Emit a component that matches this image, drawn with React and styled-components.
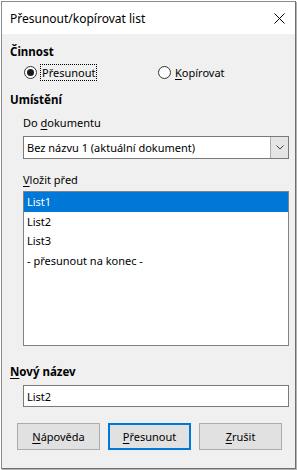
import React from "react"
import styled, { createGlobalStyle } from "styled-components"

const GlobalStyle = createGlobalStyle`
  html, body {
    margin: 0;
    padding: 0;
    background: #ffffff;
  }
  body {
    font-family: "Noto Sans", "Open Sans", sans-serif;
    font-size: 11px;
    color: #000;
  }
`

const Screen = styled.div`
  width: 297px;
  height: 470px;
  padding: 1px 0 0 1px;
  box-sizing: border-box;
  background: #fff;
`

const Dialog = styled.div`
  width: 295px;
  height: 468px;
  box-sizing: border-box;
  border: 1px solid #8c8c8c;
  border-right-color: #6e6e6e;
  border-bottom-color: #6e6e6e;
  box-shadow: 1px 1px 0 #b4b4b4;
  background: #f0f0f0;
  display: flex;
  flex-direction: column;
`

const TitleBar = styled.div`
  height: 32px;
  background: #fff;
  display: flex;
  align-items: center;
  justify-content: space-between;
  padding: 0 10px 0 8px;
`

const Title = styled.span`
  font-size: 12px;
`

const Body = styled.div`
  display: flex;
  flex-direction: column;
  padding: 10px 8px 0 8px;
`

const Heading = styled.div`
  font-weight: 700;
  font-size: 11.5px;
  line-height: 16px;
  margin-top: ${(p) => p.$top || 0}px;
`

const Label = styled.div`
  line-height: 16px;
  margin: ${(p) => p.$top || 0}px 0 0 13px;
`

const Key = styled.span`
  text-decoration: underline;
  text-underline-offset: 2px;
`

const RadioRow = styled.div`
  display: flex;
  align-items: center;
  margin-top: 4px;
  padding-left: 14px;
  height: 16px;
`

const Radio = styled.label`
  display: flex;
  align-items: center;
  gap: 4px;
  width: ${(p) => p.$width}px;
`

const Circle = styled.span`
  width: 13px;
  height: 13px;
  box-sizing: border-box;
  border: 1px solid #333;
  border-radius: 50%;
  background: #fff;
  display: flex;
  align-items: center;
  justify-content: center;
  &::after {
    content: "";
    width: 7px;
    height: 7px;
    border-radius: 50%;
    background: ${(p) => (p.$checked ? "#1a1a1a" : "transparent")};
  }
`

const Focus = styled.span`
  outline: 1px dotted #000;
  outline-offset: 0;
  padding: 0 1px;
  line-height: 15px;
`

const Select = styled.div`
  margin: 5px 0 0 13px;
  width: 266px;
  height: 23px;
  box-sizing: border-box;
  border: 1px solid #7a7a7a;
  background: #fff;
  display: flex;
  align-items: stretch;
`

const SelectText = styled.div`
  flex: 1;
  padding-left: 3px;
  display: flex;
  align-items: center;
`

const DropButton = styled.div`
  width: 17px;
  background: #e5e5e5;
  border-left: 1px solid #adadad;
  display: flex;
  align-items: center;
  justify-content: center;
`

const ListBox = styled.div`
  margin: 3px 0 0 13px;
  width: 266px;
  height: 155px;
  box-sizing: border-box;
  border: 1px solid #828282;
  background: #fff;
`

const Item = styled.div`
  height: 19.5px;
  line-height: 19.5px;
  padding-left: 3px;
  background: ${(p) => (p.$selected ? "#0078d7" : "transparent")};
  color: ${(p) => (p.$selected ? "#fff" : "#000")};
`

const Input = styled.div`
  margin: 5px 0 0 13px;
  width: 266px;
  height: 22px;
  box-sizing: border-box;
  border: 1px solid #7a7a7a;
  background: #fff;
  padding-left: 3px;
  display: flex;
  align-items: center;
`

const Buttons = styled.div`
  display: flex;
  gap: 8px;
  margin: 16px 0 0 7px;
`

const Button = styled.div`
  width: 83px;
  height: 27px;
  box-sizing: border-box;
  background: #e1e1e1;
  border: ${(p) => (p.$default ? "2px solid #0078d7" : "1px solid #adadad")};
  display: flex;
  align-items: center;
  justify-content: center;
`

const CloseIcon = () => (
  <svg width="11" height="11" viewBox="0 0 11 11">
    <path d="M0.5 0.5 L10.5 10.5 M10.5 0.5 L0.5 10.5" stroke="#000" strokeWidth="1" />
  </svg>
)

const Chevron = () => (
  <svg width="8" height="5" viewBox="0 0 8 5">
    <path d="M0.5 0.5 L4 4 L7.5 0.5" fill="none" stroke="#444" strokeWidth="1" />
  </svg>
)

const App = () => {
  return (
    <Screen>
      <GlobalStyle />
      <Dialog>
        <TitleBar>
          <Title>Přesunout/kopírovat list</Title>
          <CloseIcon />
        </TitleBar>
        <Body>
          <Heading>Činnost</Heading>
          <RadioRow>
            <Radio $width={134}>
              <Circle $checked />
              <Focus>Přesunout</Focus>
            </Radio>
            <Radio>
              <Circle />
              <span>
                <Key>K</Key>opírovat
              </span>
            </Radio>
          </RadioRow>
          <Heading $top={12}>Umístění</Heading>
          <Label $top={7}>
            Do <Key>d</Key>okumentu
          </Label>
          <Select>
            <SelectText>Bez názvu 1 (aktuální dokument)</SelectText>
            <DropButton>
              <Chevron />
            </DropButton>
          </Select>
          <Label $top={13}>
            <Key>V</Key>ložit před
          </Label>
          <ListBox>
            <Item $selected>List1</Item>
            <Item>List2</Item>
            <Item>List3</Item>
            <Item>- přesunout na konec -</Item>
          </ListBox>
          <Heading $top={18}>
            <Key>N</Key>ový název
          </Heading>
          <Input>List2</Input>
          <Buttons>
            <Button>
              <span>
                <Key>N</Key>ápověda
              </span>
            </Button>
            <Button $default>
              <span>
                <Key>P</Key>řesunout
              </span>
            </Button>
            <Button>
              <span>
                <Key>Z</Key>rušit
              </span>
            </Button>
          </Buttons>
        </Body>
      </Dialog>
    </Screen>
  )
}

export default App
